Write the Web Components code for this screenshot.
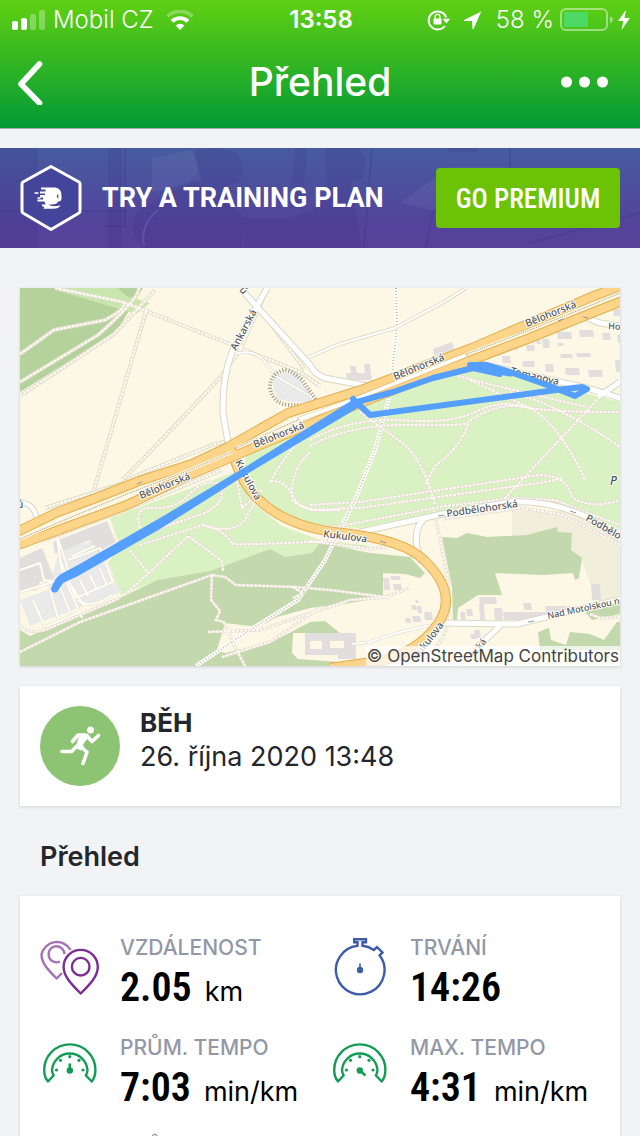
<!DOCTYPE html>
<html lang="cs">
<head>
<meta charset="utf-8">
<meta name="viewport" content="width=device-width, initial-scale=1">
<title>Přehled</title>
<style>
  html, body { height: 100%; }
  body { margin: 0; background: #f1f3f5; color: #23272b; font-family: Inter, "Liberation Sans", sans-serif; }
</style>
</head>
<body>
<workout-app></workout-app>

<script>
const define = (name, html, setup) => {
  const template = document.createElement('template');
  template.innerHTML = html;
  customElements.define(name, class extends HTMLElement {
    constructor() {
      super();
      this.attachShadow({ mode: 'open' }).append(template.content.cloneNode(true));
    }
    connectedCallback() { if (setup) setup(this, this.shadowRoot); }
  });
};

/* ---------- status bar ---------- */
define('status-bar', `
<style>
  :host { display: grid; grid-template-columns: 1fr auto 1fr; align-items: center; height: 40px; padding: 0 10px 0 12px; color: #fff; font-size: 24px; line-height: 28px; }
  div { display: flex; align-items: center; }
  .right { justify-content: flex-end; }
  svg { display: block; flex: none; }
  .carrier { margin: 0 12px 0 8px; }
  .carrier, .charge { font-weight: 300; }
  time { font-weight: 600; }
  .charge { margin: 0 6px 0 14px; }
  .arrow { margin-left: 12px; }
  .bolt { margin-left: 4px; }
</style>
<div>
  <svg width="33" height="20" viewBox="0 0 33 20" fill="#fff"><rect y="11" width="6" height="9" rx="2"/><rect x="9" y="8" width="6" height="12" rx="2"/><g opacity=".3"><rect x="18" y="4" width="6" height="16" rx="2"/><rect x="27" width="6" height="20" rx="2"/></g></svg>
  <span class="carrier">Mobil CZ</span>
  <svg width="28" height="20" viewBox="0 0 28 20" fill="none" stroke="#fff" stroke-width="3.8"><path opacity=".3" d="M1.5 6.4a18 18 0 0 1 25 0"/><path d="M6 11.4a11.5 11.5 0 0 1 16 0"/><path fill="#fff" stroke="none" d="M14 20l-4.4-4.4a6.3 6.3 0 0 1 8.800 0z"/></svg>
</div>
<time>13:58</time>
<div class="right">
  <svg width="24" height="22" viewBox="0 0 24 22"><path d="M17.800 17A9 9 0 1 1 19.200 8.500" fill="none" stroke="#fff" stroke-width="2"/><path d="M15.600 9.800h7.600l-3.800 4.800z" fill="#fff"/><rect x="6.500" y="9.500" width="8" height="6" rx="1" fill="#fff"/><path d="M8.100 10V7.800a2.400 2.400 0 0 1 4.800 0v2.200" fill="none" stroke="#fff" stroke-width="1.400"/></svg>
  <svg class="arrow" width="19" height="19" viewBox="0 0 19 19"><path d="M18.200.6L10.600 18a.6.6 0 0 1-1.100-.2L9 10H1.200a.6.6 0 0 1-.2-1.100z" fill="#fff"/></svg>
  <span class="charge">58&nbsp;%</span>
  <svg width="54" height="24" viewBox="0 0 54 24"><rect x="1" y="1" width="46" height="21" rx="5" fill="none" stroke="#fff" stroke-opacity=".45" stroke-width="2"/><path d="M50 8.500q3 1 3 3.200t-3 3.300z" fill="#fff" fill-opacity=".45"/><rect x="4" y="4" width="24" height="15" fill="#4cd964"/></svg>
  <svg class="bolt" width="12" height="20" viewBox="0 0 12 20"><path d="M8 0L0 11h5.300L3.500 20 12 8H6.500z" fill="#fff"/></svg>
</div>`);

/* ---------- title bar ---------- */
define('nav-bar', `
<style>
  :host { display: grid; grid-template-columns: 1fr auto 1fr; align-items: center; height: 84px; padding: 0 30px 4px 16px; color: #fff; }
  button { display: block; margin: 0; padding: 0; border: 0; background: none; }
  button:last-child { justify-self: end; }
  h1 { margin: 0; padding-left: 14px; font-size: 39px; line-height: 48px; font-weight: 500; }
  svg { display: block; }
</style>
<button aria-label="Zpět"><svg width="30" height="46" viewBox="0 0 30 46"><path d="M23.500 5L5 25 23.500 44" fill="none" stroke="#fff" stroke-width="5.600" stroke-linecap="round" stroke-linejoin="round"/></svg></button>
<h1><slot></slot></h1>
<button aria-label="Další"><svg width="50" height="12" viewBox="0 0 50 12" fill="#fff"><circle cx="6.500" cy="6" r="5.500"/><circle cx="24.500" cy="6" r="5.500"/><circle cx="42.500" cy="6" r="5.500"/></svg></button>`);

/* ---------- premium banner ---------- */
define('premium-banner', `
<style>
  :host { display: flex; position: relative; align-items: center; height: 100px; padding: 0 20px; box-sizing: border-box; overflow: hidden; color: #fff; background: linear-gradient(#475c9f, #53439c 75%, #57419a); }
  .scene { position: absolute; inset: 0; width: 100%; height: 100%; }
  .badge { position: relative; flex: none; margin-right: 20px; }
  span { position: relative; flex: 1; font: 700 27px/32px Roboto, sans-serif; white-space: nowrap; }
  button { position: relative; width: 184px; height: 60px; padding: 2px 0 0; border: 0; border-radius: 4px; background: #6cc305; color: #fff; font: 500 27px/32px "Roboto Condensed", "Liberation Sans Narrow", Roboto, sans-serif; white-space: nowrap; }
</style>
<svg class="scene" viewBox="0 0 640 100" preserveAspectRatio="xMidYMid slice" fill="#35277c">
  <g opacity=".14"><path d="M0 0h34v100H0zM34 0h4v100h-4zM108 0h14v100h-14z"/><path d="M195 3c12-5 34-3 44 3l4 20-4 8-12 4-6 10 24 22-4 30h-98c-14-14-14-34 4-44l40-20 12-14z"/><path d="M325 0h35l6 12-3 18-12 4 10 66h-60l6-30 20-26z"/><path d="M240 70h50l30-10 10 40H245z"/><path d="M295 0h12l-5 60h-12zM448 0h30v4h-30z"/></g>
  <g opacity=".25" fill="none" stroke="#35277c" stroke-width="1.500"><path d="M125 0v80M0 63h125M105 78h22M510 0v60M372 0l-8 100M530 95l110-30M434 60l-8 40"/></g>
  <g opacity=".05" fill="#fff"><path d="M152 10l40-8 10 30-50 12zM400 55l50-36h60v30l60 14-60 16z"/></g>
  <path d="M158 62q-18 14-14 36" fill="none" stroke="#fff" stroke-opacity=".1" stroke-width="2"/>
</svg>
<svg class="badge" width="62" height="68" viewBox="0 0 62 68">
  <path d="M31 2.500L59 18q1 .6 1 2v27q0 1.500-1 2L31 65.500 3 49q-1-.6-1-2V20q0-1.400 1-2z" fill="#44449a" stroke="#fff" stroke-width="3" stroke-linejoin="round"/>
  <path d="M21 23.500H35Q41.500 24.500 41.500 31V35Q41 38 38 37.500 37.500 40.500 32 40.500H28.500Q32 43.300 40.500 41.300 39 44.800 33 44.800H23.500L24.300 43.200Q22 42.700 21.500 40.500H25.500L24.500 37.500H17.500V35.500H23V33.500H20V31H25V29.500H20V27.500H25.500V25.500H21z" fill="#fff"/><path d="M39.800 30.500a2 2 0 1 0 0 3.500h-1.500v-3.500z" fill="#44449a"/>
  <path d="M14.500 29h4M17.500 34h3" stroke="#fff" stroke-width="1.600"/>
</svg>
<span>TRY A TRAINING PLAN</span>
<button>GO PREMIUM</button>`);

/* ---------- route map ---------- */
const box = (...rects) => rects.map(([x, y, w, h]) => `M${x} ${y}h${w}l1 ${h}h-${w}z`).join('');
const stroke = (paths, layers) => layers.map(([colour, width, dash]) =>
  `<path d="${paths.join(' ')}" stroke="${colour}" stroke-width="${width}"${dash ? ` stroke-dasharray="${dash}"` : ''}/>`).join('');
const area = (fill, d) => `<path fill="${fill}" stroke="none" d="${d}"/>`;
const name = (x, y, angle, text, size = 10) => `<text transform="translate(${x} ${y}) rotate(${angle})" font-size="${size}">${text}</text>`;

const mapArt = [
  area('#b5d19c', 'M20 288H143L116 332 20 392z'),
  area('#c8e6ae', 'M58 288H118L127 296 150 303 136 314 62 292z'),
  area('#f1eedb', 'M512 510L575 512 620 538V598L598 604 582 560 512 536z'),
  area('#daf1c3', 'M247 452L357 408 470 364 520 376 620 402V530L585 514 550 502 510 499 445 510 360 528 320 526 285 515 262 498 244 465z'),
  area('#daf1c3', 'M110 518L235 472 252 502 282 526 320 540 372 546 312 553 285 557 270 549 210 571 157 580 121 595 108 562 120 548z'),
  area('#c3d8ac', 'M20 630L30 636 122 597 157 580 210 571 270 549 285 557 312 553 320 543 370 553 410 557 425 573 420 578 405 574 383 573V597L350 603 310 608 277 617 258 627 225 623 217 650 225 653 270 643 310 622 325 621 340 633 293 633 292 653 298 659 340 662V666H20z'),
  area('#c3d8ac', 'M442 537L457 538 467 533 487 537 527 535 557 527 558 532 572 533 571 550 582 558 579 578 575 580 573 573 543 575 495 573 502 595H478L458 608 457 620H453L452 587z'),
  area('#c3d8ac', 'M538 632L549 628 551 640 566 645 570 632 590 634 604 640 617 622H620V650H540zM585 612L620 602V614L592 620z'),
  area('#ebeaea', 'M20 600L48 590 60 548 95 541 121 592 30 626zM274 378q8-8 22-4l20 28q-28 2-38-4-6-8-4-20zM291 408l8-1 2 4-9 2z'),
  area('#e3dede', 'M20 558L42 548 54 578 40 582 36 590 20 592zM53 542L107 521 116 542 98 552 90 540 55 554z'),
  area('#e3dede', 'M433 349l19-7 2 7-19 7z'),
  area('#e3dede', box([346,373,25,7],[350,366,6,7],[364,364,6,10],[502,356,8,7],[522,361,12,6],[526,345,8,6],[536,340,4,4],[545,364,8,8],[542,339,7,9],[557,332,14,7],[579,330,14,7],[602,333,8,7],[560,354,12,4],[576,353,14,4],[565,368,14,7],[588,370,14,7],[557,343,6,3],[613,309,7,7],[615,360,5,12],[617,335,3,8],[514,346,3,4])),
  area('#e3dede', box([383,578,6,12],[390,576,10,4],[393,584,8,6],[411,605,5,5],[417,606,4,7],[424,612,8,8],[405,618,5,5],[412,616,8,6],[460,612,5,9],[466,609,6,7],[479,597,17,7],[479,604,5,16],[494,608,8,12],[503,612,25,8],[523,603,8,7],[528,612,20,6],[545,606,26,6],[591,584,9,16],[470,634,6,5],[474,630,6,8],[415,600,3,3])),
  area('#e3dede', 'M305 633h51v26h-18v-4h-33zM310 641v8h12v-8zM330 641v7h14v-7z'),

  stroke(['M55 288L123 302Q128 308 105 320L54 330 20 354', 'M139 288Q138 300 98 335L20 382', 'M20 396L114 334 155 290', 'M123 302L240 348 300 372 320 386', 'M147 308L94 490', 'M267 290L240 350 220 378 147 455 122 480', 'M268 320L305 370'],
    [['#e2decb', 4], ['#fffdf5', 2, '3 1']]),
  stroke(['M396 288L397 325 392 375', 'M389 397L375 450 355 500 325 560 298 600 253 628 196 666'], [['#fff', 4], ['#c9bfa9', 2, '1 2']]),
  stroke(['M304 359L340 344 395 328 444 302 466 288'], [['#deddca', 4], ['#fff', 2]]),
  stroke([
    'M310 440Q350 418 400 420 450 424 475 412T520 406 620 412', 'M310 446Q350 424 410 425T468 422Q500 400 530 408 560 425 585 480', 'M310 452Q290 470 292 500 305 512 340 510',
    'M360 412L405 445Q425 465 435 505', 'M468 424Q460 448 435 466L425 485', 'M597 400L550 450 505 498', 'M458 376Q490 385 587 407M470 380L530 408M510 392Q560 405 620 447', 'M310 505L360 502 540 475Q566 475 572 497 590 510 620 500', 'M310 510L360 508 545 482 562 478',
    'M270 482Q282 460 300 440M270 481Q286 480 294 498T345 508', 'M140 528Q134 508 150 508 175 510 190 494T218 484Q230 500 205 513L140 535', 'M140 545L203 525Q240 538 250 510L255 503', 'M203 525Q225 530 232 544 250 545 330 541', 'M124 595L150 572 188 536 222 561 223 571', 'M130 550L148 573', 'M20 652L80 622 212 575 225 577 236 585 295 587 330 590 385 597 410 588', 'M212 575L211 600 220 611 216 620 224 622 234 645 245 666', 'M208 632L260 630 320 610 350 600 390 597', 'M222 657L270 642 320 608', 'M293 587L303 593 293 598', 'M434 510L448 580 450 620 442 640 425 660', 'M262 490L242 508 235 470', 'M20 625Q28 635 45 630L120 598', 'M590 614L600 618 620 617',
    'M442 519L520 508 560 514 620 545', 'M310 526L335 527 445 506 515 498 555 500 590 514 620 525', 'M310 541L370 549 392 546'
  ], [['#e2dccf', 3], ['#fff8f3', 2, '3 1']]),
  stroke(['M55 524L62 572 82 618M56 532L68 570M33 600L45 627 80 612M20 570L40 563 44 580 53 582 67 577M68 560L100 548 113 582 76 598 60 560M72 556L95 546M77 600Q90 610 112 595M50 590L58 618M60 587L70 612M72 586L84 606M80 580L88 596M90 575L97 590M100 568L106 584M20 592L60 580'],
    [['#e2e0cb', 3], ['#fffef8', 2]]),
  stroke(['M450 622Q400 630 370 642L352 644M370 643L374 658', 'M230 355Q256 346 268 366L276 376 310 396 320 406'], [['#d9d8c8', 3], ['#fff', 2]]),
  stroke(['M319 404L302 380Q292 370 284 370 270 374 270 388 273 404 290 405L316 406'], [['#99958a', 4, '1 2']]),
  stroke(['M45 508L120 484 140 474 215 444 232 440', 'M45 540L130 508 222 470'], [['#e2decb', 4], ['#fffdf5', 2, '3 1']]),
  stroke(['M20 503Q34 502 37 520'], [['#d8d7c6', 6], ['#fff', 4]]),
  stroke(['M267 288L252 315 232 352Q222 378 223 413L229 448', 'M240 288L310 365Q314 374 325 378L367 386', 'M470 362L507 370 587 388 620 398M598 397L620 382M582 316L600 323 620 326', 'M360 532L447 513 510 502Q550 500 587 517L622 540M425 518Q409 532 422 562', 'M443 623L517 624 622 599M500 626L457 666'],
    [['#d9d8c7', 7], ['#fff', 5]]),
  stroke(['M233 452Q238 478 257 498 287 528 343 533 405 540 425 561 455 590 442 617 425 648 385 660L330 668'], [['#e1ad4b', 10], ['#fdd58a', 8]]),
  stroke(['M15 533L58 512 96 498 139 481 192 464 228 447 288 413 364 389 472 348 530 323 594 296 625 284', 'M15 546L127 505 192 474 246 451 320 420 365 401 418 380 472 360 530 338 594 312 625 300', 'M227 448L236 455'], [['#e1ad4b', 10], ['#fdd58a', 8]]),
  stroke(['M298 420L353 400 466 355'], [['#e1ad4b', 5], ['#fff', 4]]),
  stroke(['M20 539L62 521 127 494 192 469 232 452M236 448L300 419M467 354L530 330 594 304 620 293'], [['#fff6dd', 3], ['#9c978a', 1, '1 1']]),
  name(141, 499, -22, 'Bělohorská'), name(255, 448, -22, 'Bělohorská'), name(395, 380, -22, 'Bělohorská'), name(527, 327, -22, 'Bělohorská'),
  name(236, 351, -62, 'Ankarská'), name(235, 462, 62, 'Kukulova'), name(323, 537, 7, 'Kukulova'), name(417, 660, -52, 'Kukulova'),
  name(447, 517, -8, 'Podbělohorská'), name(585, 520, 30, 'Podbělo'), name(548, 619, -12, 'Nad Motolskou ner', 9), name(510, 374, 13, 'Tomanova'), name(608, 329, 4, 'Ho', 9),
  name(474, 657, -50, 'ecká', 9), name(239, 290, 50, 'ů'), name(17, 508, 0, 'ů'),
  `<text x="610" y="485" font-size="12" font-style="italic" fill="#7d9275">P</text>`,
  stroke(['M438 516l6-1M570 511l6 2M380 541l6 2M528 622l6-1M558 321l5-2M583 317l5 1M137 484l5-2'], [['#8799a3', 1]]),
  '<path fill="#549fff" d="M51 589Q54 579 61 574L78 565 160 518 247 466 354 399 361 406 247 474 160 529 78 576 63 583 57 592Q52 594 51 589z"/>',
  '<g stroke="#549fff" stroke-linecap="round" stroke-linejoin="round"><path stroke-width="6" d="M353 399L370 415 556 390 582 387 587 389 575 396 550 386 510 372 487 365 470 365 500 374 473 368 433 378 393 392 357 402"/><path stroke-width="7" d="M474 366L510 373"/></g>'
].join('');

define('route-map', `
<style>
  :host { display: block; position: relative; box-shadow: 0 1px 3px rgba(0,0,0,.14); }
  svg { display: block; width: 100%; height: auto; background: #fcf8e5; }
  text { fill: #555; stroke: #fff; stroke-width: 2px; stroke-linejoin: round; paint-order: stroke; font-family: "Noto Sans", sans-serif; font-weight: 500; }
  small { position: absolute; right: 0; bottom: 0; padding: 0 1px; background: rgba(255,255,255,.72); color: #444; font-size: 17px; line-height: 20px; white-space: nowrap; }
</style>
<svg viewBox="20 288 600 378" fill="none" role="img" aria-label="Mapa trasy">${mapArt}</svg>
<small>© OpenStreetMap Contributors</small>`);

/* ---------- white card ---------- */
define('info-card', `
<style>:host { display: block; background: #fff; box-shadow: 0 1px 3px rgba(0,0,0,.14); }</style><slot></slot>`);

define('activity-summary', `
<style>
  :host { display: flex; gap: 20px; padding: 20px; line-height: 34px; }
  svg { flex: none; display: block; }
  h2, p { margin: 0; }
  h2 { font-size: 26px; font-weight: 700; }
  p { font-size: 27px; }
</style>
<svg width="80" height="80" viewBox="0 0 80 80"><circle cx="40" cy="40" r="40" fill="#8dc474"/><circle cx="50.500" cy="24" r="3.500" fill="#fff"/><g fill="none" stroke="#fff" stroke-width="3.600" stroke-linecap="round" stroke-linejoin="round"><path d="M32.500 35.500L38 29H46L52 35.500 58.500 29.500"/><path d="M22 45.500H31.500L37 40"/><path d="M40.500 40.500L47 46 43 57.500"/></g><path d="M39.500 28H48l1.500 2-6.500 8.500 1.500 4-4 2-5-3z" fill="#fff"/></svg>
<div><h2><slot name="sport"></slot></h2><p><slot></slot></p></div>`);

define('section-title', `
<style>:host { display: block; } h2 { margin: 0; padding: 0 20px; font-size: 27px; line-height: 34px; font-weight: 600; }</style>
<h2><slot></slot></h2>`);

/* ---------- statistics ---------- */
const gauge = needle => `<g stroke="#129c56" stroke-width="2.400" stroke-linejoin="round"><path d="M14 39L8 45.500Q4.200 41 4.200 34A25.500 25.500 0 0 1 55.400 34Q55.400 41 51.700 45.500L45.500 39"/><path d="M14 40Q12 37 12 34A17.800 17.800 0 0 1 47.500 34Q47.500 37 45.500 40"/></g>
<g fill="#129c56"><circle cx="16.500" cy="34" r="1.600"/><circle cx="20.500" cy="24.300" r="1.600"/><circle cx="29.800" cy="20.700" r="1.600"/><circle cx="39" cy="24.300" r="1.600"/><circle cx="43" cy="34" r="1.600"/><circle cx="29.800" cy="34.500" r="3.200"/></g><path d="M29.800 34.500${needle}" stroke="#129c56" stroke-width="2.600"/>`;
const icons = {
  distance: `<g stroke-width="2.400" stroke-linejoin="round"><path stroke="#a571b7" d="M30.700 14A15.800 15.800 0 0 0 1.500 18.500C1.500 27 8 34 16.700 42.500L22 37"/><path stroke="#a571b7" d="M24.500 18A8 8 0 1 0 20 25.500"/><path stroke="#7c2d94" d="M40.700 57.500C31 48 23.600 40 23.600 31a17 17 0 0 1 34.200 0C57.800 40 50.500 48 40.700 57.500z"/><circle stroke="#7c2d94" cx="40.700" cy="30.700" r="8.800"/></g>`,
  duration: `<g stroke="#3e5caa" stroke-width="2.400"><path d="M27.500 9.800V6.200H24.200V3.200H36V6.200H32.500V9.800Q38.500 10.300 43.900 14L47 11.200 52.500 16.400 49.600 19.300A24.300 24.300 0 1 1 27.500 9.800z"/><path d="M30 34V27.500" stroke-width="1.600"/></g><circle cx="30" cy="34" r="3.200" fill="#3e5caa"/>`,
  pace: gauge('V27.500'),
  'max-pace': gauge('L35.500 39.500')
};
define('stat-item', `
<style>
  :host { display: flex; gap: 20px; height: 100px; }
  svg { flex: none; display: block; }
  dl, dd { margin: 0; white-space: nowrap; }
  dt { color: #9298a5; font-size: 21px; line-height: 24px; font-weight: 500; }
  dd { color: #000; font-size: 27px; line-height: 56px; }
  b { margin-right: 13px; font: 600 40px/56px "Roboto Condensed", "Liberation Sans Narrow", Roboto, sans-serif; }
</style>
<svg width="60" height="60" viewBox="0 0 60 60" fill="none" aria-hidden="true"></svg>
<dl><dt></dt><dd><b></b><span></span></dd></dl>`, (host, root) => {
  root.querySelector('svg').innerHTML = icons[host.getAttribute('icon')];
  for (const [tag, attr] of [['dt', 'label'], ['b', 'value'], ['span', 'unit']])
    root.querySelector(tag).textContent = host.getAttribute(attr) || '';
});

define('stat-grid', `
<style>:host { display: grid; grid-template-columns: 1fr 1fr; padding: 40px 0 40px 20px; }</style><slot></slot>`);

/* ---------- application ---------- */
define('workout-app', `
<style>
  :host { display: flex; flex-direction: column; height: 100vh; }
  header { flex: none; background: linear-gradient(#60d012, #029a36); border-bottom: 1px solid #a9b0ac; }
  main { flex: 1; min-height: 0; overflow-y: auto; scrollbar-width: none; padding-top: 19px; }
  .content { display: flex; flex-direction: column; gap: 20px; padding: 40px 20px 20px; }
  section-title { padding: 14px 0 22px; }
</style>
<header><status-bar></status-bar><nav-bar>Přehled</nav-bar></header>
<main>
  <premium-banner></premium-banner>
  <div class="content">
    <route-map></route-map>
    <info-card><activity-summary><span slot="sport">BĚH</span>26. října 2020 13:48</activity-summary></info-card>
    <section>
      <section-title>Přehled</section-title>
      <info-card><stat-grid>
        <stat-item icon="distance" label="VZDÁLENOST" value="2.05" unit="km"></stat-item>
        <stat-item icon="duration" label="TRVÁNÍ" value="14:26"></stat-item>
        <stat-item icon="pace" label="PRŮM. TEMPO" value="7:03" unit="min/km"></stat-item>
        <stat-item icon="max-pace" label="MAX. TEMPO" value="4:31" unit="min/km"></stat-item>
        <stat-item icon="pace" label="PRŮM. RYCHLOST"></stat-item>
      </stat-grid></info-card>
    </section>
  </div>
</main>`);
</script>
</body>
</html>
